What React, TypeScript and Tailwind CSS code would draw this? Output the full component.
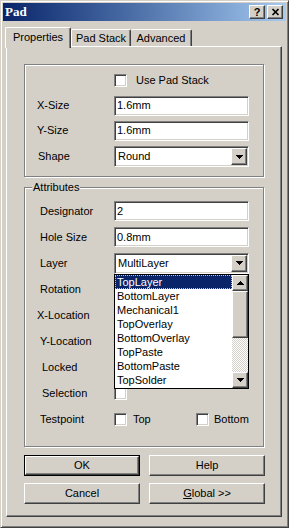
import type { ReactNode } from 'react';

const raised =
  'border border-t-white border-l-white border-r-[#404040] border-b-[#404040] shadow-[inset_-1px_-1px_0_#808080,inset_1px_1px_0_#d4d0c8]';
const sunken =
  'border border-t-[#808080] border-l-[#808080] border-r-white border-b-white shadow-[inset_1px_1px_0_#404040,inset_-1px_-1px_0_#d4d0c8]';

const layers = [
  'TopLayer',
  'BottomLayer',
  'Mechanical1',
  'TopOverlay',
  'BottomOverlay',
  'TopPaste',
  'BottomPaste',
  'TopSolder',
];

function Arrow({ up }: { up?: boolean }) {
  return (
    <svg width="7" height="4" viewBox="0 0 7 4" className={up ? 'rotate-180' : ''}>
      <rect x="0" y="0" width="7" height="1" fill="#000" />
      <rect x="1" y="1" width="5" height="1" fill="#000" />
      <rect x="2" y="2" width="3" height="1" fill="#000" />
      <rect x="3" y="3" width="1" height="1" fill="#000" />
    </svg>
  );
}

function Field({ value }: { value: string }) {
  return <div className={`flex h-[20px] w-[135px] items-center bg-white pl-[2px] ${sunken}`}>{value}</div>;
}

function Combo({ value }: { value: string }) {
  return (
    <div className={`flex h-[21px] w-[135px] items-center bg-white pl-[3px] ${sunken}`}>
      <span className="flex-1">{value}</span>
      <div className={`mr-[1px] flex h-[17px] w-[16px] items-center justify-center bg-[#d4d0c8] ${raised}`}>
        <Arrow />
      </div>
    </div>
  );
}

function Check() {
  return <div className={`h-[13px] w-[13px] shrink-0 bg-white ${sunken}`} />;
}

function Row({ label, indent, height, children }: { label: string; indent: string; height: string; children?: ReactNode }) {
  return (
    <div className={`flex items-center ${height}`}>
      <span className={`w-[77px] shrink-0 ${indent}`}>{label}</span>
      {children}
    </div>
  );
}

function Button({ children, primary }: { children: ReactNode; primary?: boolean }) {
  if (primary) {
    return (
      <div className="h-[21px] w-[116px] border border-black">
        <div className={`flex h-full items-center justify-center bg-[#d4d0c8] ${raised}`}>{children}</div>
      </div>
    );
  }
  return <div className={`flex h-[21px] w-[116px] items-center justify-center bg-[#d4d0c8] ${raised}`}>{children}</div>;
}

function LayerList() {
  return (
    <div className="absolute left-0 top-[21px] z-10 flex h-[115px] w-[135px] border border-black bg-white">
      <div className="flex flex-1 flex-col">
        {layers.map((name, i) => (
          <div
            key={name}
            className={
              i === 0
                ? 'h-[14px] bg-[#0a246a] pl-[2px] leading-[14px] text-white outline-1 outline-dotted outline-[#a6caf0] -outline-offset-1'
                : 'h-[14px] pl-[2px] leading-[14px]'
            }
          >
            {name}
          </div>
        ))}
      </div>
      <div className="flex w-[16px] flex-col">
        <div className={`flex h-[16px] items-center justify-center bg-[#d4d0c8] ${raised}`}>
          <Arrow up />
        </div>
        <div className={`h-[47px] bg-[#d4d0c8] ${raised}`} />
        <div className="flex-1 bg-[repeating-conic-gradient(#fff_0%_25%,#d4d0c8_0%_50%)] bg-[length:2px_2px]" />
        <div className={`flex h-[16px] items-center justify-center bg-[#d4d0c8] ${raised}`}>
          <Arrow />
        </div>
      </div>
    </div>
  );
}

export default function App() {
  return (
    <div className="min-h-screen bg-white font-['Liberation_Sans',Arial,sans-serif] text-[11px] text-black">
      <div className="flex h-[528px] w-[289px] flex-col border border-t-[#d4d0c8] border-l-[#d4d0c8] border-r-[#404040] border-b-[#404040] bg-[#d4d0c8] p-[2px] shadow-[inset_1px_1px_0_#fff,inset_-1px_-1px_0_#808080]">
        {/* title bar */}
        <div className="flex h-[18px] items-center bg-gradient-to-r from-[#0a246a] to-[#a6caf0] pl-[2px] pr-[3px]">
          <span className="flex-1 font-['Liberation_Serif',serif] text-[13px] font-bold text-white">Pad</span>
          <div className={`flex h-[14px] w-[16px] items-center justify-center bg-[#d4d0c8] text-[11px] font-bold leading-none ${raised}`}>
            ?
          </div>
          <div className={`ml-[2px] flex h-[14px] w-[16px] items-center justify-center bg-[#d4d0c8] ${raised}`}>
            <svg width="9" height="8" viewBox="0 0 9 8">
              <path d="M1.5 1l6 6M7.5 1l-6 6" stroke="#000" strokeWidth="1.7" />
            </svg>
          </div>
        </div>

        {/* tabs */}
        <div className="mt-[6px] flex h-[19px] items-end pl-[2px]">
          <div className="relative z-10 -mb-[2px] flex h-[21px] w-[66px] items-center justify-center rounded-t-[2px] border-l border-t border-r border-l-white border-t-white border-r-[#404040] bg-[#d4d0c8] pb-[2px] shadow-[inset_-1px_0_0_#808080]">
            Properties
          </div>
          <div className="flex h-[17px] w-[60px] items-center justify-center rounded-t-[2px] border-l border-t border-r border-l-white border-t-white border-r-[#404040] shadow-[inset_-1px_0_0_#808080]">
            Pad Stack
          </div>
          <div className="flex h-[17px] w-[61px] items-center justify-center rounded-t-[2px] border-t border-r border-t-white border-r-[#404040] shadow-[inset_-1px_0_0_#808080]">
            Advanced
          </div>
        </div>

        {/* tab panel */}
        <div className="ml-[3px] flex h-[471px] w-[276px] flex-col border border-t-white border-l-white border-r-[#404040] border-b-[#404040] pl-[17px] pt-[17px] shadow-[inset_-1px_-1px_0_#808080]">
          <div className="flex h-[113px] w-[240px] flex-col border border-[#808080] pl-[12px] pt-[3px] shadow-[inset_1px_1px_0_#fff,1px_1px_0_#fff]">
            <div className="flex h-[25px] items-center pl-[77px]">
              <Check />
              <span className="ml-[9px]">Use Pad Stack</span>
            </div>
            <Row label="X-Size" indent="pl-0" height="h-[25px]">
              <Field value="1.6mm" />
            </Row>
            <Row label="Y-Size" indent="pl-0" height="h-[25px]">
              <Field value="1.6mm" />
            </Row>
            <Row label="Shape" indent="pl-[1px]" height="h-[27px]">
              <Combo value="Round" />
            </Row>
          </div>

          <div className="relative mt-[10px] flex h-[260px] w-[240px] flex-col border border-[#808080] pl-[12px] pt-[10px] shadow-[inset_1px_1px_0_#fff,1px_1px_0_#fff]">
            <span className="absolute -top-[7px] left-[7px] bg-[#d4d0c8] px-[1px] leading-[13px]">Attributes</span>
            <Row label="Designator" indent="pl-[3px]" height="h-[26px]">
              <Field value="2" />
            </Row>
            <Row label="Hole Size" indent="pl-[3px]" height="h-[26px]">
              <Field value="0.8mm" />
            </Row>
            <Row label="Layer" indent="pl-[3px]" height="h-[26px]">
              <div className="relative">
                <Combo value="MultiLayer" />
                <LayerList />
              </div>
            </Row>
            <Row label="Rotation" indent="pl-[3px]" height="h-[26px]" />
            <Row label="X-Location" indent="pl-0" height="h-[26px]" />
            <Row label="Y-Location" indent="pl-[3px]" height="h-[26px]" />
            <Row label="Locked" indent="pl-[5px]" height="h-[26px]" />
            <Row label="Selection" indent="pl-[5px]" height="h-[26px]">
              <Check />
            </Row>
            <Row label="Testpoint" indent="pl-[3px]" height="h-[26px]">
              <div className="flex w-[82px] items-center">
                <Check />
                <span className="ml-[6px]">Top</span>
              </div>
              <Check />
              <span className="ml-[5px]">Bottom</span>
            </Row>
          </div>

          <div className="mt-[8px] flex gap-[9px]">
            <Button primary>OK</Button>
            <Button>Help</Button>
          </div>
          <div className="mt-[7px] flex gap-[9px]">
            <Button>Cancel</Button>
            <Button>
              <span>
                <span className="underline">G</span>lobal &gt;&gt;
              </span>
            </Button>
          </div>
        </div>
      </div>
    </div>
  );
}
